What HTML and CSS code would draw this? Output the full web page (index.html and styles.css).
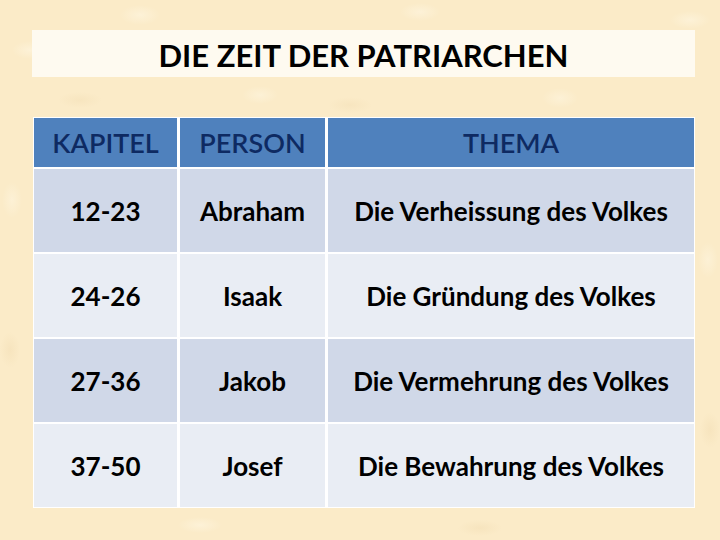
FILE: index.html
```html
<!DOCTYPE html>
<html lang="de">
<head>
<meta charset="utf-8">
<title>Die Zeit der Patriarchen</title>
<link rel="stylesheet" href="styles.css">
</head>
<body>
<div class="page">
  <div class="title-box"><h1 class="title">DIE ZEIT DER PATRIARCHEN</h1></div>
  <div class="table">
    <div class="cell head">KAPITEL</div>
    <div class="cell head">PERSON</div>
    <div class="cell head">THEMA</div>

    <div class="cell odd">12-23</div>
    <div class="cell odd">Abraham</div>
    <div class="cell odd">Die Verheissung des Volkes</div>

    <div class="cell even">24-26</div>
    <div class="cell even">Isaak</div>
    <div class="cell even">Die Gründung des Volkes</div>

    <div class="cell odd">27-36</div>
    <div class="cell odd">Jakob</div>
    <div class="cell odd">Die Vermehrung des Volkes</div>

    <div class="cell even">37-50</div>
    <div class="cell even">Josef</div>
    <div class="cell even">Die Bewahrung des Volkes</div>
  </div>
</div>
</body>
</html>
```

FILE: styles.css
```css
html, body {
  margin: 0;
  padding: 0;
}
body {
  width: 720px;
  height: 540px;
  overflow: hidden;
  font-family: Lato, "Open Sans", "Liberation Sans", sans-serif;
  background-color: #fbebc8;
  background-image:
    radial-gradient(ellipse 18px 9px at 30px 50px, rgba(255,248,230,0.5), rgba(255,248,230,0)),
    radial-gradient(ellipse 20px 10px at 140px 15px, rgba(255,248,230,0.5), rgba(255,248,230,0)),
    radial-gradient(ellipse 18px 9px at 260px 95px, rgba(255,248,230,0.45), rgba(255,248,230,0)),
    radial-gradient(ellipse 20px 9px at 420px 12px, rgba(255,248,230,0.5), rgba(255,248,230,0)),
    radial-gradient(ellipse 18px 10px at 560px 98px, rgba(255,248,230,0.45), rgba(255,248,230,0)),
    radial-gradient(ellipse 20px 9px at 690px 20px, rgba(255,248,230,0.5), rgba(255,248,230,0)),
    radial-gradient(ellipse 10px 18px at 12px 200px, rgba(255,248,230,0.45), rgba(255,248,230,0)),
    radial-gradient(ellipse 10px 18px at 10px 350px, rgba(240,218,175,0.4), rgba(240,218,175,0)),
    radial-gradient(ellipse 10px 18px at 708px 260px, rgba(255,248,230,0.45), rgba(255,248,230,0)),
    radial-gradient(ellipse 10px 18px at 710px 430px, rgba(240,218,175,0.4), rgba(240,218,175,0)),
    radial-gradient(ellipse 22px 8px at 200px 525px, rgba(255,248,230,0.5), rgba(255,248,230,0)),
    radial-gradient(ellipse 22px 8px at 480px 528px, rgba(240,218,175,0.4), rgba(240,218,175,0)),
    radial-gradient(ellipse 22px 8px at 350px 105px, rgba(240,218,175,0.35), rgba(240,218,175,0)),
    radial-gradient(ellipse 22px 8px at 80px 100px, rgba(240,218,175,0.35), rgba(240,218,175,0));
}
.page {
  padding: 30px 0 0 32px;
}
.title-box {
  width: 663px;
  height: 47px;
  background: #fefaf0;
  display: flex;
  align-items: center;
  justify-content: center;
}
.title {
  margin: 0;
  font-size: 31px;
  font-weight: 700;
  color: #000;
  line-height: 1;
  padding-top: 3px;
}
.table {
  margin: 40px 0 0 1px;
  width: 660px;
  padding: 1px;
  background: #fff;
  display: grid;
  grid-template-columns: 143px 145px 366px;
  grid-template-rows: 49px repeat(4, 83px);
  column-gap: 3px;
  row-gap: 2px;
}
.cell {
  display: flex;
  align-items: center;
  justify-content: center;
  font-size: 26px;
  font-weight: 700;
  color: #000;
}
.head {
  background: #4f81bd;
  color: #0e2a62;
  font-size: 27px;
  font-weight: 600;
}
.odd {
  background: #d0d8e8;
}
.even {
  background: #e9edf4;
}
```
